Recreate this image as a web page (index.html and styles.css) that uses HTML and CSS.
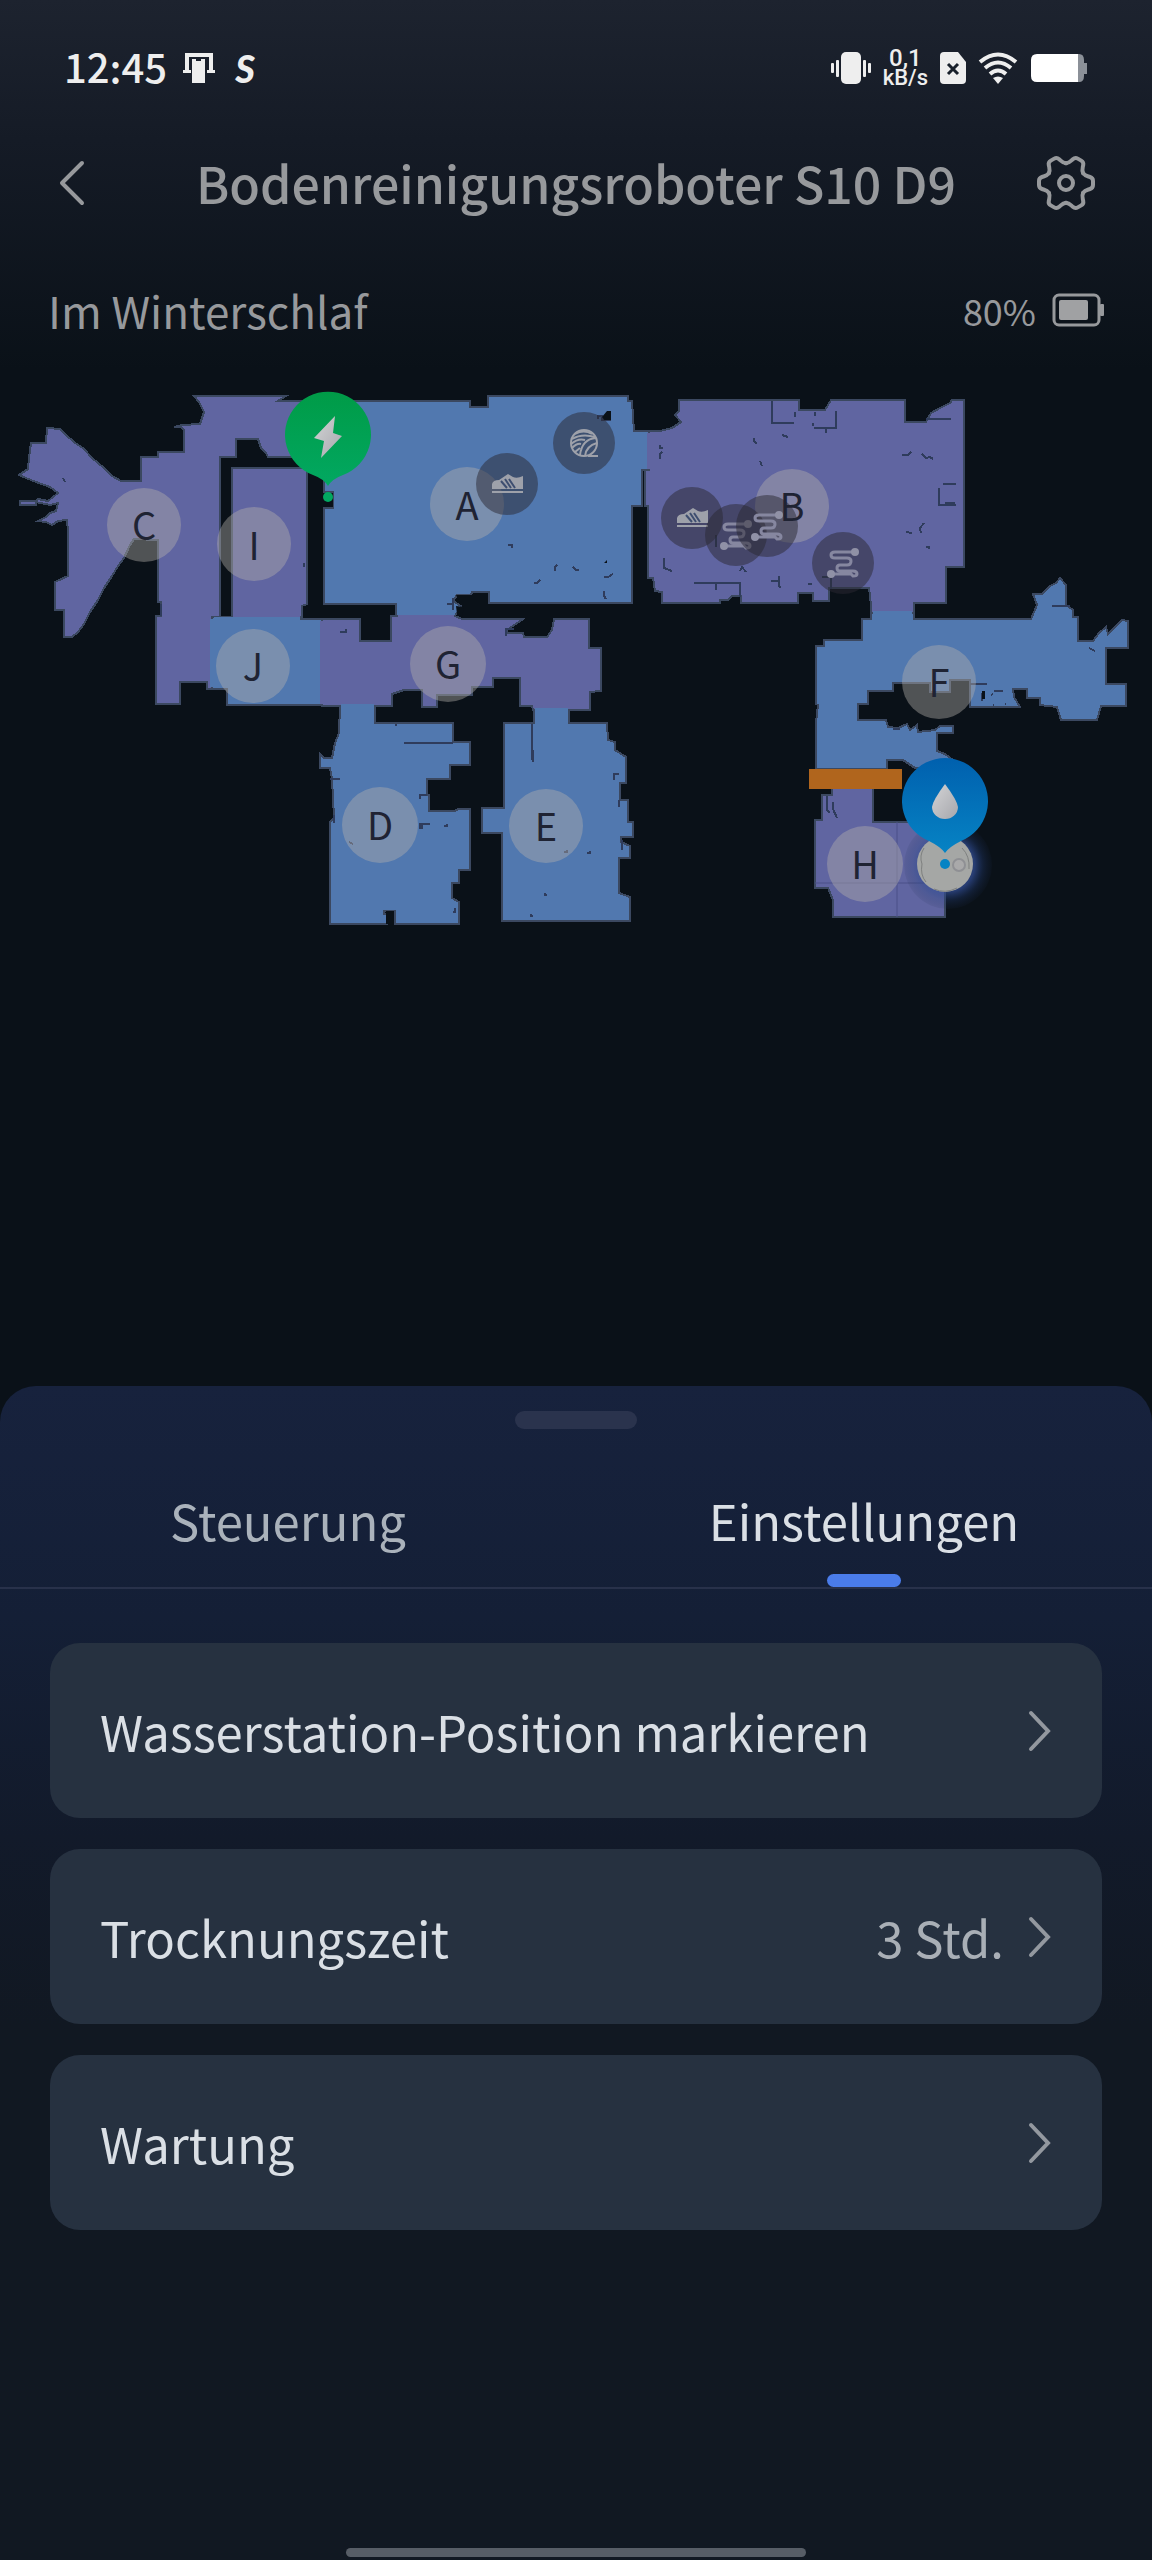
FILE: index.html
```html
<!DOCTYPE html>
<html lang="de">
<head>
<meta charset="UTF-8">
<meta name="viewport" content="width=device-width, initial-scale=1.0">
<title>Bodenreinigungsroboter S10 D9</title>
<link rel="stylesheet" href="styles.css">
</head>
<body>

<!-- Phone status bar -->
<div class="status-bar">
  <div class="status-group">
    <span class="clock">12:45</span>
    <svg width="32" height="32" viewBox="0 0 32 32" fill="#eee" aria-hidden="true">
      <path d="M2 1H30V18H32V21H24V18H26V5H6V18H8V21H0V18H2Z"/>
      <path d="M9 7H13V9H18V7H22V31H9Z"/>
    </svg>
    <span class="app-mark">S</span>
  </div>
  <div class="status-group status-right">
    <svg width="40" height="34" viewBox="0 0 40 34" fill="#eee" aria-hidden="true">
      <rect x="10" y="1" width="20" height="32" rx="5"/>
      <rect x="0" y="12" width="3" height="10" rx="1"/>
      <rect x="5" y="9" width="3" height="17" rx="1"/>
      <rect x="32" y="9" width="3" height="17" rx="1"/>
      <rect x="37" y="12" width="3" height="10" rx="1"/>
    </svg>
    <span class="speed"><span class="speed-value">0,1</span><span>kB/s</span></span>
    <svg width="26" height="34" viewBox="0 0 26 34" aria-hidden="true">
      <path d="M4 1H18L26 11V29Q26 33 22 33H4Q0 33 0 29V5Q0 1 4 1Z" fill="#eee"/>
      <path d="M8 13L18 23M18 13L8 23" stroke="#18202b" stroke-width="3"/>
    </svg>
    <svg width="40" height="34" viewBox="0 0 40 34" fill="none" stroke="#eee" stroke-width="4" aria-hidden="true">
      <path d="M2 11Q20 -4 38 11"/>
      <path d="M7 17Q20 6 33 17"/>
      <path d="M12 23Q20 16 28 23"/>
      <path d="M15 27Q20 24 25 27L20 33Z" fill="#eee" stroke="none"/>
    </svg>
    <svg width="58" height="34" viewBox="0 0 58 34" aria-hidden="true">
      <path d="M44 3H49Q54 3 54 9V12H57V23H54V25Q54 31 49 31H44Z" fill="#8b9098"/>
      <path d="M7 3H48V31H7Q1 31 1 25V9Q1 3 7 3Z" fill="#fff"/>
    </svg>
  </div>
</div>

<header class="header">
  <button type="button" aria-label="Zurück">
    <svg width="60" height="60" viewBox="0 0 60 60" fill="none" stroke="#97999c" stroke-width="4" stroke-linecap="round" stroke-linejoin="round">
      <path d="M26 11L6 31L26 51"/>
    </svg>
  </button>
  <h1>Bodenreinigungsroboter S10 D9</h1>
  <button type="button" aria-label="Einstellungen">
    <svg width="60" height="60" viewBox="-30 -31 60 60" fill="none" stroke="#97999c" stroke-width="4" stroke-linejoin="round" stroke-linecap="round">
      <g id="tooth"><path d="M17 -10C19 -7 21 -7 24 -6Q27 -5 27 -2V2Q27 5 24 6C21 7 19 7 17 10"/></g>
      <use href="#tooth" transform="rotate(60)"/>
      <use href="#tooth" transform="rotate(120)"/>
      <use href="#tooth" transform="rotate(180)"/>
      <use href="#tooth" transform="rotate(240)"/>
      <use href="#tooth" transform="rotate(300)"/>
      <circle r="7"/>
    </svg>
  </button>
</header>

<div class="state">
  <span class="state-text">Im Winterschlaf</span>
  <span class="charge">80%
    <svg width="52" height="34" viewBox="0 0 52 34" aria-hidden="true">
      <rect x="2" y="2" width="45" height="30" rx="5" fill="none" stroke="#97999c" stroke-width="3"/>
      <rect x="7" y="7" width="29" height="20" rx="2" fill="#a0a1a3"/>
      <rect x="48" y="11" width="4" height="12" rx="1" fill="#97999c"/>
    </svg>
  </span>
</div>

<!-- Floor plan -->
<main class="map">
  <svg viewBox="0 380 1152 560" role="img" aria-label="Karte">
    <defs>
      <linearGradient id="green" x1="0" y1="0" x2="0" y2="1">
        <stop offset="0" stop-color="#009b47"/>
        <stop offset="1" stop-color="#02a861"/>
      </linearGradient>
      <linearGradient id="blue" x1="0" y1="0" x2="0" y2="1">
        <stop offset="0" stop-color="#0060ae"/>
        <stop offset="1" stop-color="#0683c4"/>
      </linearGradient>
      <linearGradient id="silver" x1="0" y1="0" x2="1" y2="1">
        <stop offset="0" stop-color="#d4d4d6"/>
        <stop offset="1" stop-color="#a6a7ac"/>
      </linearGradient>
      <radialGradient id="glow">
        <stop offset="0.6" stop-color="#34509a" stop-opacity="0.7"/>
        <stop offset="0.8" stop-color="#26417e" stop-opacity="0.3"/>
        <stop offset="1" stop-color="#1c2c50" stop-opacity="0.1"/>
      </radialGradient>
      <g id="shoe">
        <circle class="thing" r="31"/>
        <path d="M-15 5V0Q-14 -4 -8 -4L1 -10L6 -7Q10 -5 16 -8V5ZM-15 7H16V9H-15Z" fill="#9ea1aa"/>
        <path d="M-6 -3L0 4M-2 -5L4 4M2 -5L8 4" stroke="#3e4e70" stroke-width="2"/>
      </g>
      <g id="cable">
        <circle class="thing" r="31"/>
        <path d="M12 -11H-8Q-12 -11 -12 -8Q-12 -5 -8 -5H4Q8 -5 8 -2Q8 2 4 2H-3Q-6 2 -6 5Q-6 8 -3 8H10Q14 8 14 11Q14 13 10 13L8 11H-11" fill="none" stroke="#8687a0" stroke-width="3"/>
        <circle cx="12" cy="-11" r="4" fill="#9091a6"/>
        <circle cx="-12" cy="11" r="4" fill="#9091a6"/>
      </g>
    </defs>

    <!-- Rooms -->
    <g class="rooms">
      <path class="violet" d="M194 396H286L278 401H340V457H268L266 453L261 448L258 439H236V457H220V617H212V689H207V682H180V704H156V616H161V602H158V540L134 539L130 545L124 558L118 566L112 576L104 588L98 600L90 612L84 624L78 632L72 637H64V610H55V582L68 576V532L67 520L58 521L52 525L46 522L38 521L46 517L50 513L56 511L58 503L50 505L36 502V505H20V501H36L38 499L48 501L58 493L50 487L36 482L26 478L19 475L28 469L29 458L31 443H46L47 428L60 429L66 435L74 442L84 449L92 458L104 468L112 476L121 481H141V457H158V452H184V430L181 427L174 427L182 425L200 424L204 412L199 402Z"/>
      <path class="violet" d="M232 468H307V604L302 606V620H232Z"/>
      <path class="azure" d="M212 617H301V619H322V705H227V689H212Z"/>
      <path class="violet" d="M322 619H360V641H391V616H455L462 619H523L507 630V633H523L524 637H547L552 630L554 619H589V648H601V691L590 692V710H533L532 706H520V678H493V687H472V695H437V707H422V690H404L392 694V706H322Z"/>
      <path class="azure" d="M324 401H470V407H488V396H628V401H632L634 431H649V470H642V506H632V603H489V592H472L471 595H457L453 601L461 606L455 616H396V604H324V508H333V492H324Z"/>
      <path class="violet" d="M649 431H660L672 428L681 422L675 415L679 411V400H799V410H825L831 400H905V422H926L931 413L940 408L950 403L952 400H964V567H946V603H914V613H871V605L869 588H829V601H813V593H798V603H741V596L732 596L728 600H720V603H662V592L655 591L653 578H648V506H645V470H649Z"/>
      <path class="azure" d="M871 613H914V619H1031L1037 605L1033 594H1042L1050 586L1056 583L1060 578L1066 585V605L1073 610V617H1078V641H1093L1099 633L1106 627L1108 634L1114 628L1122 620L1128 621V648H1106V684H1126V706H1101L1097 720H1061L1057 707L1040 705V698H1027V689H1013L1014 697L1020 707H970V680H950V692H930V683H893V691H868V704H858V720H886L888 727L898 728L907 724L910 730L917 725L918 732L935 730L940 726H953V733H937V751L945 754L953 760V768H915L903 760H887V769H816V722L818 705L816 704V646H824V640H862V619H871Z"/>
      <path class="violet" d="M832 788H873V822H945V904L945 917H833V900L828 888H815V820H822V795H832Z"/>
      <path class="azure" d="M340 706H375V723H453V742H470V765H450V779H427V795H429V811H455L458 809H470V870H459V883H452V898L459 902V924H395V911H384V914H387V924H330V822L334 818L332 779L330 768H320V754L324 758H332L335 743L339 733Z"/>
      <path class="azure" d="M534 710H569V723H607L608 740L615 742V750L626 757V783H620V800H628V822H633V837H621V842L630 846V858H619V893L630 897V921H502V833H482V808H504V723H534Z"/>
    </g>

    <!-- Open passages between rooms -->
    <g class="seams">
      <path stroke="#6065a1" d="M322 621V704M398 617H454M233 618H300M649 433V469"/>
      <path stroke="#5178af" d="M212 619V687M214 619H300M341 706H374M535 710H568M873 613H912"/>
    </g>

    <!-- Obstacles and wall fragments -->
    <path class="marks" d="M508 545h4v3M555 571v-4l2-2M573 567l3 3h3M534 583h3l3-3M604 577h4l5-3M604 591v5l2 3M598 419v-3h4v4h8v-9M447 604h6v-6M453 604v6M340 632h6v-3M506 636v-7h8M772 401v22h22M795 412v5M815 412v4M813 423v3M814 428h22v-17M826 428v5M754 438v3l3 3M782 435l6 2M760 461l2 5M660 445v3h3M660 459v-5l2-2M902 455h6l3-3M922 454l4 4 4-1 3 2M926 419h25M943 484h13M939 488v17h17M945 503h10M921 533l-1-5 4-5M906 532l6 1M926 547h3v2M664 558v10l8 3M740 571l2-4 4 5M694 583h46v14M716 583v7M771 581h9M779 576v10l2 2M808 584h4M822 577h9v12M716 535v12M1052 606h18M1089 648l6 3M970 684h17M982 693v8M991 695l2-1M994 691h9M993 705h1M1005 704h1M893 729h7M827 796v14l3 3M833 802v7l4 9M404 743h49M395 725h2M330 779h10M420 799v-4h7M420 829v-5h10M422 825v4M444 826h3v-2M349 842l4 2M453 912h2v-4M334 815v8M532 724v36M533 750v12M587 853h3v-2M564 852h3v-2M545 893v2h2M531 914v2h2M614 780v-6h5M619 800v7M622 840v10M63 478l2 4M304 563v4M161 604v12"/>
    <path class="void" d="M602 417l5-6h4v9h-7zM456 606l8 1-2 10-5-3zM604 563h3v-3zM982 691h3v8h-3zM386 911h8v13h-8zM456 595h16v8h-12z"/>
    <path class="grid" d="M897 822V917M815 883H930"/>
    <rect x="809" y="769" width="93" height="20" fill="#b0651d"/>

    <!-- Room labels -->
    <g class="badges">
      <circle cx="144" cy="525" r="37"/>
      <circle cx="254" cy="544" r="37"/>
      <circle cx="253" cy="666" r="37"/>
      <circle cx="467" cy="504" r="37"/>
      <circle cx="448" cy="664" r="38"/>
      <circle cx="380" cy="825" r="38"/>
      <circle cx="546" cy="826" r="37"/>
      <circle cx="792" cy="506" r="37"/>
      <circle cx="939" cy="682" r="37"/>
      <circle cx="865" cy="864" r="38"/>
    </g>
    <use href="#shoe" x="507" y="484"/>
    <use href="#shoe" x="692" y="518"/>
    <use href="#cable" x="736" y="535"/>
    <use href="#cable" x="767" y="526"/>
    <use href="#cable" x="843" y="563"/>
    <g transform="translate(584 443)" fill="none" stroke="#9ea1aa" stroke-width="2">
      <circle class="thing" r="31" stroke="none"/>
      <circle r="13"/>
      <path d="M-9 -9Q0 -14 8 -9M-12 -4Q-2 -10 11 -6M-13 1Q-6 -5 1 -3M-12 5Q-7 0 -3 1M-4 12Q-2 -4 12 -5M1 13Q2 3 13 0M4 13H14M-9 9L-4 5"/>
    </g>
    <g class="labels">
      <text x="144" y="540">C</text>
      <text x="254" y="560">I</text>
      <text x="253" y="681">J</text>
      <text x="467" y="520">A</text>
      <text x="448" y="679">G</text>
      <text x="380" y="840">D</text>
      <text x="546" y="841">E</text>
      <text x="792" y="521">B</text>
      <text x="939" y="697">F</text>
      <text x="865" y="879">H</text>
    </g>

    <!-- Charging dock -->
    <path d="M328 486Q324 479 313 475A43 43 0 1 1 343 475Q332 479 328 486Z" fill="url(#green)"/>
    <path d="M335 416L314 438L324 441L321 458L342 436L333 433Z" fill="url(#silver)"/>
    <rect x="324" y="493" width="9" height="14" fill="#0a1118"/>
    <circle cx="328" cy="497" r="5" fill="#02a861"/>

    <!-- Robot and water station -->
    <circle cx="948" cy="865" r="44" fill="url(#glow)"/>
    <circle cx="945" cy="864" r="28" fill="#a5a7a5"/>
    <path d="M924 848Q919 856 922 864Q920 875 926 882M962 848Q970 856 969 869M934 889Q945 894 957 888" fill="none" stroke="#7e807f"/>
    <circle cx="959" cy="865" r="6" fill="#a9a9aa" stroke="#8f9094" stroke-width="2"/>
    <path d="M945 853Q941 847 929 841A43 43 0 1 1 961 841Q949 847 945 853Z" fill="url(#blue)"/>
    <path d="M945 784Q957 800 958 807A13 12 0 0 1 932 807Q933 800 945 784Z" fill="url(#silver)"/>
    <circle cx="945" cy="864" r="5" fill="#0683c4"/>
  </svg>
</main>

<!-- Bottom sheet -->
<section class="sheet">
  <div class="handle"></div>
  <div class="tabs" role="tablist">
    <button type="button" class="tab" role="tab" aria-selected="false">Steuerung</button>
    <button type="button" class="tab active" role="tab" aria-selected="true">Einstellungen</button>
  </div>
  <div class="cards">
    <button type="button" class="card">
      <span class="card-title">Wasserstation-Position markieren</span>
      <svg class="chevron" viewBox="0 0 24 42"><path d="M3 3L20 21L3 39"/></svg>
    </button>
    <button type="button" class="card">
      <span class="card-title">Trocknungszeit</span>
      <span class="card-value">3 Std.</span>
      <svg class="chevron" viewBox="0 0 24 42"><path d="M3 3L20 21L3 39"/></svg>
    </button>
    <button type="button" class="card">
      <span class="card-title">Wartung</span>
      <svg class="chevron" viewBox="0 0 24 42"><path d="M3 3L20 21L3 39"/></svg>
    </button>
  </div>
  <div class="home-bar"></div>
</section>

</body>
</html>
```
FILE: styles.css
```css
* {
  box-sizing: border-box;
}
body {
  margin: 0;
  min-height: 100vh;
  display: flex;
  flex-direction: column;
  font-family: "Noto Sans CJK SC", "Noto Sans", sans-serif;
  color: #97999c;
  background: #0a1118 linear-gradient(#1d232f, #151b26 140px, #0a1118 370px) no-repeat;
}
button {
  font-family: inherit;
  color: inherit;
  background: none;
  border: none;
  padding: 0;
  cursor: pointer;
}
svg {
  display: block;
}

/* Status bar */
.status-bar {
  display: flex;
  justify-content: space-between;
  align-items: center;
  height: 136px;
  padding: 0 64px;
  color: #eee;
}
.status-group {
  display: flex;
  align-items: center;
  gap: 16px;
}
.status-right {
  gap: 12px;
}
.clock {
  font-size: 40px;
  font-weight: 500;
  line-height: 44px;
  padding-bottom: 4px;
}
.app-mark {
  font-family: Lato, sans-serif;
  font-size: 38px;
  font-weight: 900;
  font-style: italic;
  line-height: 40px;
  padding-left: 4px;
}
.speed {
  display: flex;
  flex-direction: column;
  align-items: center;
  gap: 2px;
  font-family: Roboto, sans-serif;
  font-size: 22px;
  font-weight: 500;
  line-height: 18px;
}
.speed-value {
  font-size: 24px;
}

/* Header */
.header {
  display: flex;
  justify-content: space-between;
  align-items: center;
  height: 92px;
  padding: 0 56px;
}
.header h1 {
  margin: 0;
  font-size: 50px;
  font-weight: 500;
  line-height: 60px;
}
.state {
  display: flex;
  justify-content: space-between;
  align-items: center;
  height: 64px;
  margin-top: 50px;
  padding: 0 48px;
}
.state-text {
  font-size: 44px;
  line-height: 60px;
}
.charge {
  display: flex;
  align-items: center;
  gap: 16px;
  font-size: 36px;
  line-height: 60px;
}

/* Map */
.map {
  flex-grow: 1;
  padding: 38px 0 60px;
}
.map svg {
  width: 100%;
}
.rooms path {
  stroke: #3b4860;
  stroke-width: 2;
  shape-rendering: crispEdges;
}
.violet {
  fill: #6065a1;
}
.azure {
  fill: #5178af;
}
.seams {
  fill: none;
  stroke-width: 4;
}
.marks {
  fill: none;
  stroke: #2f3c5c;
  stroke-width: 2;
  shape-rendering: crispEdges;
}
.void {
  fill: #0a1118;
}
.grid {
  fill: none;
  stroke: #4b5088;
}
.badges {
  fill: rgba(181, 178, 172, 0.41);
}
.thing {
  fill: rgba(41, 40, 50, 0.5);
}
.labels {
  fill: #1f2333;
  font-size: 38px;
  text-anchor: middle;
}

/* Bottom sheet */
.sheet {
  display: flex;
  flex-direction: column;
  border-radius: 36px 36px 0 0;
  background: #111822 linear-gradient(#17223d, #141f36 230px, #121a2a 450px, #111822 640px) no-repeat;
}
.handle {
  width: 122px;
  height: 18px;
  margin: 25px auto 0;
  border-radius: 9px;
  background: #2a334d;
}
.tabs {
  display: flex;
  height: 160px;
  border-bottom: 2px solid #28314a;
}
.tab {
  flex: 1;
  position: relative;
  padding-top: 24px;
  font-size: 49px;
  line-height: 60px;
  color: #aab2bb;
}
.tab.active {
  color: #dadfe5;
}
.tab.active::after {
  content: "";
  position: absolute;
  left: 50%;
  bottom: 0;
  width: 74px;
  height: 13px;
  margin-left: -37px;
  border-radius: 7px;
  background: #4a7cea;
}
.cards {
  display: flex;
  flex-direction: column;
  gap: 31px;
  padding: 54px 50px 0;
}
.card {
  display: flex;
  align-items: center;
  gap: 24px;
  height: 175px;
  padding: 0 50px;
  border-radius: 30px;
  font-size: 49px;
  line-height: 60px;
  text-align: left;
  background: #263140;
}
.card-title {
  flex: 1;
  color: #dadfe5;
}
.card-value {
  color: #a9afb6;
}
.chevron {
  width: 24px;
  height: 42px;
  fill: none;
  stroke: #93989f;
  stroke-width: 4;
  stroke-linecap: round;
}
.home-bar {
  width: 40%;
  height: 9px;
  margin: 318px auto 3px;
  border-radius: 5px;
  background: #575d66;
}
```
